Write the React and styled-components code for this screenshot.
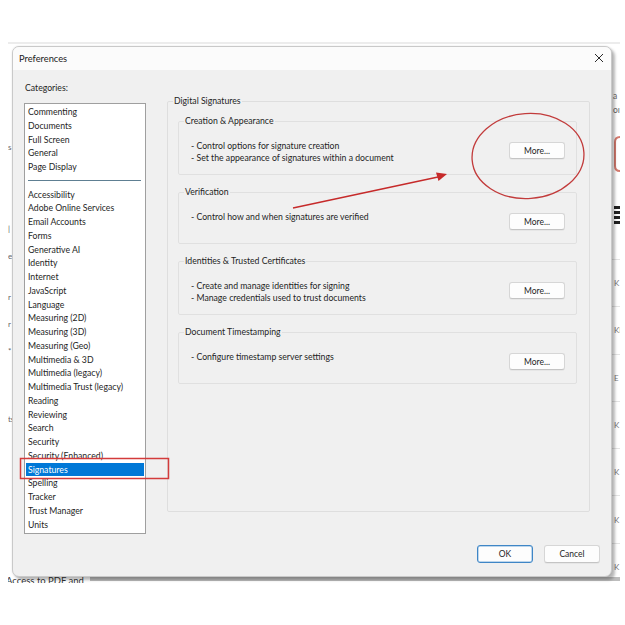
import React from 'react';
import styled, { createGlobalStyle } from 'styled-components';

const FONT = `Lato, "Open Sans", "Liberation Sans", sans-serif`;

const Global = createGlobalStyle`
  html, body { margin: 0; padding: 0; background: #fff; }
  body { font-family: ${FONT}; color: #1e1e1e; }
  * { box-sizing: border-box; }
`;

const Page = styled.div`
  position: relative;
  width: 625px;
  height: 625px;
  overflow: hidden;
  background: #fff;
  padding: 42px 5px 0 8px;
`;

/* the application window that sits behind the dialog */
const Screen = styled.div`
  position: relative;
  width: 612px;
  height: 541px;
  overflow: hidden;
  background: #fff;
  box-shadow: inset 0 2px 0 #ececec;
  display: flex;
  flex-direction: column;
`;

const ScreenBody = styled.div`
  flex: 1;
  display: flex;
  justify-content: space-between;
  min-height: 0;
`;

const LeftStrip = styled.div`
  width: 5px;
  padding-top: 99px;
  font-size: 8px;
  line-height: 13.6px;
  white-space: pre;
  color: #666;
  overflow: hidden;
`;

const RightStrip = styled.div`
  width: 8px;
  padding-top: 47px;
  display: flex;
  flex-direction: column;
  color: #666;
  font-size: 8.5px;
  overflow: hidden;
`;

const StripLine = styled.div`
  line-height: 14px;
  white-space: nowrap;
  padding-left: 1px;
`;

const Bracket = styled.svg`
  margin-top: 19px;
  flex: none;
`;

const BarsGlyph = styled.div`
  margin-top: 34px;
  margin-left: 2px;
  width: 6px;
  height: 20px;
  flex: none;
  background: repeating-linear-gradient(#222 0 3px, transparent 3px 5px);
`;

const StripRows = styled.div`
  margin-top: 33px;
  display: flex;
  flex-direction: column;
`;

const StripRow = styled.div`
  height: 47.3px;
  flex: none;
  border-top: 1px solid #e4e4e4;
  display: flex;
  align-items: center;
  padding-left: 2px;
  font-size: 8px;
  color: #777;
`;

const ScreenFooter = styled.div`
  height: 7px;
  flex: none;
  display: flex;
  align-items: flex-start;
  gap: 6px;
  overflow: hidden;
`;

const FooterText = styled.span`
  font-size: 9.5px;
  line-height: 10px;
  margin-left: -2px;
  color: #333;
  white-space: nowrap;
`;

const FooterBar = styled.div`
  flex: 1;
  height: 4px;
  margin-top: 1px;
  background: #bdbdbd;
`;

const Dialog = styled.div`
  position: absolute;
  left: 4px;
  top: 4px;
  width: 600px;
  height: 531px;
  display: flex;
  flex-direction: column;
  background: #f0f0f0;
  border: 1px solid #c9c9c9;
  border-radius: 7px;
  box-shadow: 3px 3px 3px rgba(0, 0, 0, 0.28), 0 0 2px rgba(0, 0, 0, 0.12);
  overflow: hidden;
`;

const TitleBar = styled.div`
  height: 23px;
  flex: none;
  display: flex;
  align-items: center;
  justify-content: space-between;
  padding: 0 6px 1px 6px;
  background: #fbfbfb;
`;

const Title = styled.span`
  font-size: 9.3px;
  color: #1a1a1a;
`;

const CloseButton = styled.button`
  width: 12px;
  height: 12px;
  padding: 0;
  border: 0;
  background: transparent;
  display: flex;
  align-items: center;
  justify-content: center;
`;

const Main = styled.div`
  flex: 1;
  display: flex;
  gap: 21px;
  padding: 12px 21px 0 11px;
  min-height: 0;
`;

const LeftColumn = styled.div`
  width: 122px;
  flex: none;
  display: flex;
  flex-direction: column;
`;

const FieldLabel = styled.div`
  font-size: 8.7px;
  line-height: 12px;
  height: 12px;
  margin-bottom: 9px;
  padding-left: 1px;
`;

const ListBox = styled.div`
  height: 431px;
  background: #fff;
  border: 1px solid #9f9f9f;
  padding-top: 1px;
  overflow: hidden;
`;

const ListItem = styled.div`
  height: 13.75px;
  line-height: 13.75px;
  margin: 0 1px;
  padding-left: 2px;
  font-size: 8.7px;
  white-space: nowrap;
  color: ${(p) => (p.$selected ? '#fff' : '#1e1e1e')};
  background: ${(p) => (p.$selected ? '#0078d7' : 'transparent')};
`;

const ListSeparator = styled.div`
  height: 13.75px;
  display: flex;
  align-items: center;
  padding: 0 4px 0 3px;
  &::after {
    content: '';
    flex: 1;
    height: 1px;
    background: #5e7f92;
  }
`;

const RightColumn = styled.div`
  flex: 1;
  min-width: 0;
  padding-top: 13px;
`;

const GroupBox = styled.fieldset`
  margin: 0;
  min-width: 0;
  border: 1px solid ${(p) => (p.$outer ? '#dedede' : '#e0e0e0')};
  border-radius: 2px;
  padding: ${(p) => (p.$outer ? '8px 12px 0 10px' : '13px 11px 10px 12px')};
  height: ${(p) => (p.$outer ? '417px' : 'auto')};
  display: ${(p) => (p.$outer ? 'flex' : 'block')};
  flex-direction: column;
  gap: 11px;
`;

const Caption = styled.legend`
  font-size: 8.7px;
  line-height: 12px;
  padding: 0 1px;
  margin-left: ${(p) => (p.$outer ? '-5px' : '-7px')};
  color: #1e1e1e;
`;

const GroupRow = styled.div`
  display: flex;
  align-items: flex-start;
  justify-content: space-between;
  min-height: 22px;
`;

const Bullets = styled.ul`
  margin: 0;
  padding: 0;
  list-style: none;
`;

const Bullet = styled.li`
  font-size: 8.7px;
  line-height: 12px;
  white-space: nowrap;
  &::before {
    content: '- ';
  }
`;

const PushButton = styled.button`
  width: 56px;
  height: ${(p) => (p.$tall ? 18 : 17)}px;
  margin-top: ${(p) => (p.$tall ? 0 : 2)}px;
  flex: none;
  font-family: ${FONT};
  font-size: 8.5px;
  color: #1e1e1e;
  background: #fdfdfd;
  border: 1px solid ${(p) => (p.$primary ? '#3f86c6' : '#d6d6d6')};
  border-bottom-color: ${(p) => (p.$primary ? '#3f86c6' : '#c4c4c4')};
  border-radius: 3px;
  box-shadow: ${(p) => (p.$primary ? 'inset 0 0 0 0.5px #7fb0dc' : '0 1px 0 rgba(0,0,0,0.04)')};
  padding: 0;
`;

const Footer = styled.div`
  flex: none;
  display: flex;
  justify-content: flex-end;
  gap: 11px;
  padding: 11px 11px 13px 0;
`;

const Annotations = styled.svg`
  position: absolute;
  left: 0;
  top: 0;
  width: 625px;
  height: 625px;
  pointer-events: none;
`;

const categoriesTop = ['Commenting', 'Documents', 'Full Screen', 'General', 'Page Display'];
const categories = [
  'Accessibility',
  'Adobe Online Services',
  'Email Accounts',
  'Forms',
  'Generative AI',
  'Identity',
  'Internet',
  'JavaScript',
  'Language',
  'Measuring (2D)',
  'Measuring (3D)',
  'Measuring (Geo)',
  'Multimedia & 3D',
  'Multimedia (legacy)',
  'Multimedia Trust (legacy)',
  'Reading',
  'Reviewing',
  'Search',
  'Security',
  'Security (Enhanced)',
  'Signatures',
  'Spelling',
  'Tracker',
  'Trust Manager',
  'Units',
];

const groups = [
  {
    title: 'Creation & Appearance',
    lines: ['Control options for signature creation', 'Set the appearance of signatures within a document'],
  },
  { title: 'Verification', lines: ['Control how and when signatures are verified'] },
  {
    title: 'Identities & Trusted Certificates',
    lines: ['Create and manage identities for signing', 'Manage credentials used to trust documents'],
  },
  { title: 'Document Timestamping', lines: ['Configure timestamp server settings'] },
];

const stripKeys = ['K', 'KI', 'E', 'K', 'K', 'K', 'K'];
const leftStripText = 's\n\n\n\n\n\n|\n\ne\n\n\nr\n\nr\n\n*\n\n\n\n\nts';

function CloseIcon() {
  return (
    <svg width="10" height="10" viewBox="0 0 10 10">
      <path d="M1 1 L9 9 M9 1 L1 9" stroke="#2b2b2b" strokeWidth="1" fill="none" />
    </svg>
  );
}

export default function App() {
  return (
    <Page>
      <Global />
      <Screen>
        <ScreenBody>
          <LeftStrip>{leftStripText}</LeftStrip>
          <RightStrip>
            <StripLine>a</StripLine>
            <StripLine>oı</StripLine>
            <Bracket width="8" height="36" viewBox="0 0 8 36">
              <path d="M8 1 Q3 1 3 6 L3 30 Q3 35 8 35" fill="none" stroke="#d47a6e" strokeWidth="2" />
            </Bracket>
            <BarsGlyph />
            <StripRows>
              {stripKeys.map((k, i) => (
                <StripRow key={i}>{k}</StripRow>
              ))}
            </StripRows>
          </RightStrip>
        </ScreenBody>
        <ScreenFooter>
          <FooterText>Access to PDF and</FooterText>
          <FooterBar />
        </ScreenFooter>

        <Dialog role="dialog" aria-label="Preferences">
          <TitleBar>
            <Title>Preferences</Title>
            <CloseButton aria-label="Close">
              <CloseIcon />
            </CloseButton>
          </TitleBar>
          <Main>
            <LeftColumn>
              <FieldLabel>Categories:</FieldLabel>
              <ListBox>
                {categoriesTop.map((c) => (
                  <ListItem key={c}>{c}</ListItem>
                ))}
                <ListSeparator />
                {categories.map((c) => (
                  <ListItem key={c} $selected={c === 'Signatures'}>
                    {c}
                  </ListItem>
                ))}
              </ListBox>
            </LeftColumn>
            <RightColumn>
              <GroupBox $outer>
                <Caption $outer>Digital Signatures</Caption>
                {groups.map((g) => (
                  <GroupBox key={g.title}>
                    <Caption>{g.title}</Caption>
                    <GroupRow>
                      <Bullets>
                        {g.lines.map((l) => (
                          <Bullet key={l}>{l}</Bullet>
                        ))}
                      </Bullets>
                      <PushButton>More...</PushButton>
                    </GroupRow>
                  </GroupBox>
                ))}
              </GroupBox>
            </RightColumn>
          </Main>
          <Footer>
            <PushButton $tall $primary>OK</PushButton>
            <PushButton $tall>Cancel</PushButton>
          </Footer>
        </Dialog>
      </Screen>
      <Annotations viewBox="0 0 625 625">
        <ellipse
          cx="528"
          cy="156"
          rx="56"
          ry="42.5"
          transform="rotate(-4 528 156)"
          fill="none"
          stroke="#c23b3b"
          strokeWidth="1.3"
        />
        <line x1="293" y1="208" x2="438" y2="177" stroke="#c62a2a" strokeWidth="1.4" />
        <path d="M447 174 L436 172.5 L438.5 181 Z" fill="#c62a2a" />
        <rect x="20.5" y="458.5" width="148" height="20" fill="none" stroke="#d33b3b" strokeWidth="1.5" />
      </Annotations>
    </Page>
  );
}
